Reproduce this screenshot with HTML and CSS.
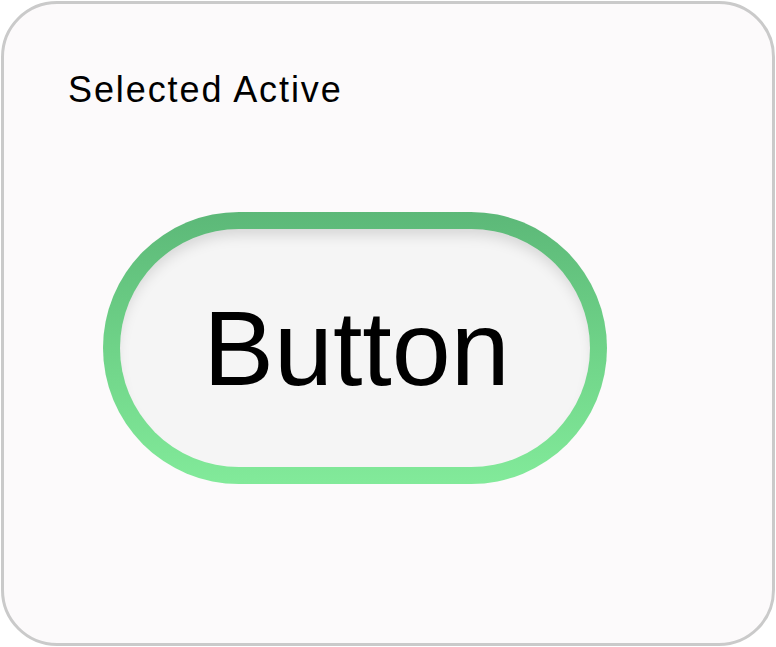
FILE: index.html
```html
<!DOCTYPE html>
<html>
<head>
<meta charset="utf-8">
<link rel="stylesheet" href="styles.css">
</head>
<body>
<div class="card">
  <div class="title">Selected Active</div>
  <div class="stage">
    <button class="btn">Button</button>
  </div>
</div>
</body>
</html>
```
FILE: styles.css
```css
html, body {
  margin: 0;
  padding: 0;
  background: #ffffff;
}
.card {
  box-sizing: border-box;
  margin: 1px;
  width: 774px;
  height: 645px;
  border: 3px solid #cacaca;
  border-radius: 56px;
  background: #fcfafb;
  padding: 62px 0 0 64px;
  font-family: "Liberation Sans", Arial, sans-serif;
}
.title {
  font-size: 36px;
  line-height: 48px;
  letter-spacing: 1.9px;
  color: #000;
}
.stage {
  padding: 98px 0 0 35px;
}
.btn {
  box-sizing: border-box;
  width: 504px;
  height: 272px;
  border: 17px solid transparent;
  border-radius: 136px;
  background:
    linear-gradient(#f5f5f5, #f5f5f5) padding-box,
    linear-gradient(180deg, #5cb878 0%, #6fd388 50%, #82ea9a 100%) border-box;
  box-shadow: inset 0 10px 14px -4px rgba(0, 0, 0, 0.13);
  font-family: "Liberation Sans", Arial, sans-serif;
  font-size: 106px;
  color: #000;
  padding: 0 0 0 3px;
  line-height: 1;
  cursor: pointer;
}
```
